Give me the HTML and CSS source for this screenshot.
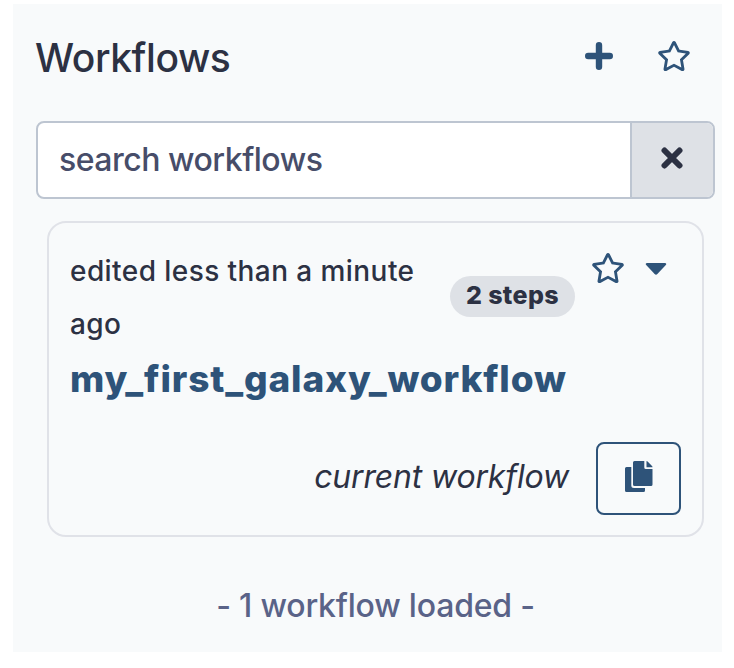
FILE: index.html
```html
<!DOCTYPE html>
<html lang="en">
<head>
<meta charset="utf-8">
<title>Workflows</title>
<link rel="stylesheet" href="styles.css">
</head>
<body>
<svg width="0" height="0" class="defs" aria-hidden="true">
  <symbol id="star" viewBox="0 0 576 512"><path d="M528.1 171.5L382 150.2 316.7 17.8c-11.7-23.600-45.600-23.900-57.400 0L194 150.200 47.900 171.500c-26.200 3.800-36.700 36.100-17.700 54.600l105.700 103-25 145.500c-4.500 26.300 23.200 46 46.400 33.700L288 439.600l130.700 68.700c23.200 12.200 50.900-7.400 46.400-33.700l-25-145.500 105.700-103c19-18.500 8.500-50.800-17.700-54.600zM388.600 312.300l23.700 138.400L288 385.400l-124.300 65.300 23.700-138.400-100.600-98 139-20.200 62.200-126 62.200 126 139 20.200-100.600 98z"/></symbol>
</svg>
<main class="panel">
  <header class="header">
    <h1 class="heading">Workflows</h1>
    <svg class="icon plus" viewBox="0 0 28 28"><path d="M14 3.200V24.800M3.200 14H24.800"/></svg>
    <svg class="icon star"><use href="#star"/></svg>
  </header>
  <div class="search">
    <span class="search-text">search workflows</span>
    <button class="clear" aria-label="Clear"><svg viewBox="0 0 22 22"><path d="M3.500 3.500L18.500 18.500M18.500 3.500L3.500 18.500"/></svg></button>
  </div>
  <article class="card">
    <div class="card-top">
      <span class="edited">edited less than a minute ago</span>
      <span class="badge">2 steps</span>
      <svg class="icon star"><use href="#star"/></svg>
      <svg class="icon caret" viewBox="0 0 22 12"><path d="M1.800 0H20.200Q22 .6 20.800 2L12.400 11Q11 12.400 9.600 11L1.200 2Q0 .6 1.800 0Z"/></svg>
    </div>
    <h2 class="name">my_first_galaxy_workflow</h2>
    <div class="card-bottom">
      <em class="current">current workflow</em>
      <button class="copy" aria-label="Copy"><svg viewBox="0 0 28 31"><path d="M1.500 6H6.300V24.500Q6.300 27 9 27H20V29.500Q20 31 18.500 31H1.500Q0 31 0 29.500V7.500Q0 6 1.500 6Z"/><path d="M9.500 0H19.300V6.500Q19.300 8 20.800 8H27.500V23.500Q27.500 25 26 25H9.500Q8 25 8 23.500V1.500Q8 0 9.500 0Z"/><path d="M21.500 0Q22.100 0 22.600 .5L27 5Q27.500 5.500 27.500 6.200H21.500Z"/></svg></button>
    </div>
  </article>
  <p class="loaded">- 1 workflow loaded -</p>
</main>
</body>
</html>
```
FILE: styles.css
```css
* { box-sizing: border-box; }
body {
  margin: 0;
  padding: 4px 12px 16px 13px;
  background: #fff;
  color: #2c3143;
  font-family: Inter, sans-serif;
  font-weight: 450;
}
.defs { display: block; height: 0; }
h1, h2, p { margin: 0; }
button { padding: 0; font: inherit; }
svg { display: block; flex: none; }
.panel {
  height: 648px;
  padding: 0 7px 0 23px;
  background: #f8fafb;
}
.header {
  display: flex;
  align-items: center;
  height: 107px;
  padding-right: 24px;
}
.heading {
  flex: 1;
  margin-left: -1px;
  font-size: 39px;
  font-weight: 550;
  letter-spacing: -0.4px;
}
.icon { fill: #2e5379; }
.plus {
  width: 28px;
  height: 28px;
  margin: -3px 44px 0 0;
  fill: none;
  stroke: #2e5379;
  stroke-width: 6.4;
  stroke-linecap: round;
}
.star { width: 34px; height: 32px; }
.header .star { margin-top: -3px; }
.search {
  display: flex;
  height: 78px;
  margin-top: 10px;
  border: 2px solid #bdc5d1;
  border-radius: 8px;
  background: #fff;
  overflow: hidden;
}
.search-text {
  flex: 1;
  padding-left: 21px;
  color: #474d69;
  font-size: 32px;
  line-height: 73px;
  letter-spacing: -0.5px;
}
.clear {
  display: grid;
  place-items: center;
  width: 83px;
  border: 0;
  border-left: 2px solid #bdc5d1;
  background: #dee1e6;
}
.clear svg {
  width: 22px;
  height: 22px;
  margin: -4px 2px 0 0;
  stroke: #2c3143;
  stroke-width: 6;
  stroke-linecap: round;
}
.card {
  height: 316px;
  margin: 22px 11px 0 11px;
  padding: 22px 21px 0;
  border: 2px solid #e0e2e8;
  border-radius: 19px;
}
.card-top { display: flex; height: 106px; }
.edited {
  width: 380px;
  font-size: 28px;
  line-height: 53px;
  letter-spacing: 0.43px;
}
.badge {
  width: 125px;
  height: 41px;
  margin: 31px 16px 0 0;
  border-radius: 21px;
  background: #dee1e6;
  font-size: 25px;
  font-weight: 800;
  line-height: 38px;
  letter-spacing: 0.4px;
  text-align: center;
}
.card .star { margin-top: 7px; }
.caret { width: 22px; height: 12px; margin: 18px 0 0 20px; }
.name {
  height: 56px;
  color: #2e5379;
  font-size: 37px;
  font-weight: 800;
  line-height: 56px;
  letter-spacing: 0.85px;
}
.card-bottom {
  display: flex;
  justify-content: flex-end;
  align-items: center;
  height: 73px;
  margin-top: 35px;
}
.current {
  margin: -5px 27px 0 0;
  font-size: 32px;
  letter-spacing: -0.18px;
}
.copy {
  display: grid;
  place-items: center;
  width: 85px;
  height: 73px;
  border: 2.5px solid #2e5379;
  border-radius: 8px;
  background: transparent;
}
.copy svg { width: 28px; height: 31px; margin: -4px 0 0; fill: #2e5379; }
.loaded {
  margin: 49px 0 0;
  color: #5a6388;
  font-size: 32px;
  line-height: 40px;
  letter-spacing: -0.2px;
  text-align: center;
}
```
